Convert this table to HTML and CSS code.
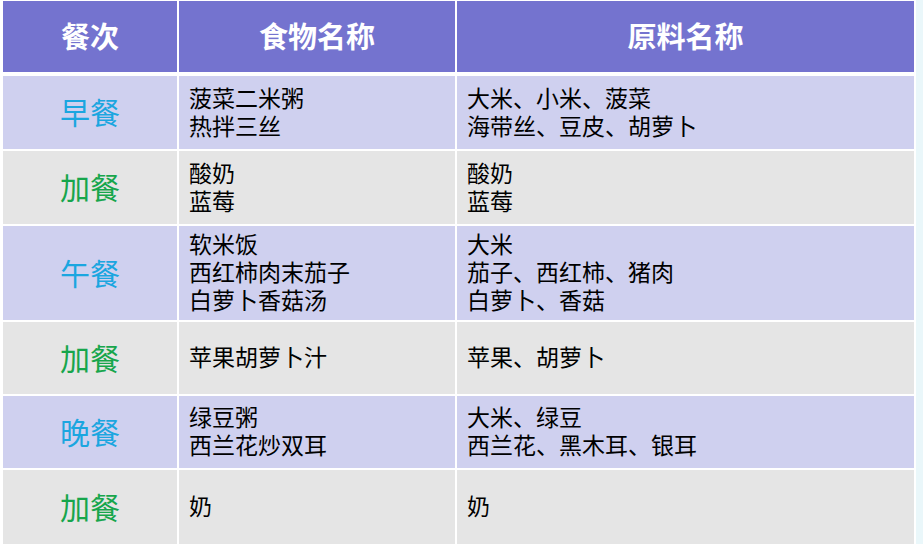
FILE: index.html
```html
<!DOCTYPE html>
<html lang="zh">
<head>
<meta charset="utf-8">
<link rel="stylesheet" href="styles.css">
</head>
<body>
<div class="page">
  <div class="sheet">
    <div class="grid head">
      <div class="cell h">餐次</div>
      <div class="cell h">食物名称</div>
      <div class="cell h">原料名称</div>
    </div>
    <div class="grid body">
      <div class="cell meal main odd r1">早餐</div>
      <div class="cell txt odd r1">菠菜二米粥<br>热拌三丝</div>
      <div class="cell txt odd r1">大米、小米、菠菜<br>海带丝、豆皮、胡萝卜</div>

      <div class="cell meal extra even r2">加餐</div>
      <div class="cell txt even r2">酸奶<br>蓝莓</div>
      <div class="cell txt even r2">酸奶<br>蓝莓</div>

      <div class="cell meal main odd r3">午餐</div>
      <div class="cell txt odd r3">软米饭<br>西红柿肉末茄子<br>白萝卜香菇汤</div>
      <div class="cell txt odd r3">大米<br>茄子、西红柿、猪肉<br>白萝卜、香菇</div>

      <div class="cell meal extra even r4">加餐</div>
      <div class="cell txt even r4">苹果胡萝卜汁</div>
      <div class="cell txt even r4">苹果、胡萝卜</div>

      <div class="cell meal main odd r5">晚餐</div>
      <div class="cell txt odd r5">绿豆粥<br>西兰花炒双耳</div>
      <div class="cell txt odd r5">大米、绿豆<br>西兰花、黑木耳、银耳</div>

      <div class="cell meal extra even r6">加餐</div>
      <div class="cell txt even r6">奶</div>
      <div class="cell txt even r6">奶</div>
    </div>
  </div>
</div>
</body>
</html>
```

FILE: styles.css
```css
html, body {
  margin: 0;
  padding: 0;
}
body {
  background: #eaf7fa;
  width: 923px;
  height: 544px;
  overflow: hidden;
  font-family: "Noto Sans CJK SC", "Noto Sans", sans-serif;
}
.page {
  width: 916px;
  height: 544px;
  background: #ffffff;
}
.sheet {
  padding: 1px 0 0 3px;
}
.grid {
  display: grid;
  grid-template-columns: 174px 276px 457px;
  column-gap: 2px;
}
.head {
  margin-bottom: 4px;
}
.body {
  row-gap: 2px;
}
.cell {
  display: flex;
  align-items: center;
  box-sizing: border-box;
}
.h {
  height: 71px;
  background: #7473cf;
  color: #ffffff;
  font-weight: 700;
  font-size: 29px;
  justify-content: center;
  padding-bottom: 4px;
}
.odd { background: #cfd0ef; }
.even { background: #e5e5e5; }
.meal {
  justify-content: center;
  font-size: 30px;
  padding-bottom: 3px;
}
.main { color: #1ba6e0; }
.extra { color: #17a64c; }
.txt {
  font-size: 23px;
  line-height: 28px;
  color: #000000;
  padding-left: 10px;
  padding-bottom: 4px;
}
.r1 { height: 73px; }
.r2 { height: 73px; }
.r3 { height: 94px; }
.r4 { height: 72px; }
.r5 { height: 72px; }
.r6 { height: 74px; }
```
